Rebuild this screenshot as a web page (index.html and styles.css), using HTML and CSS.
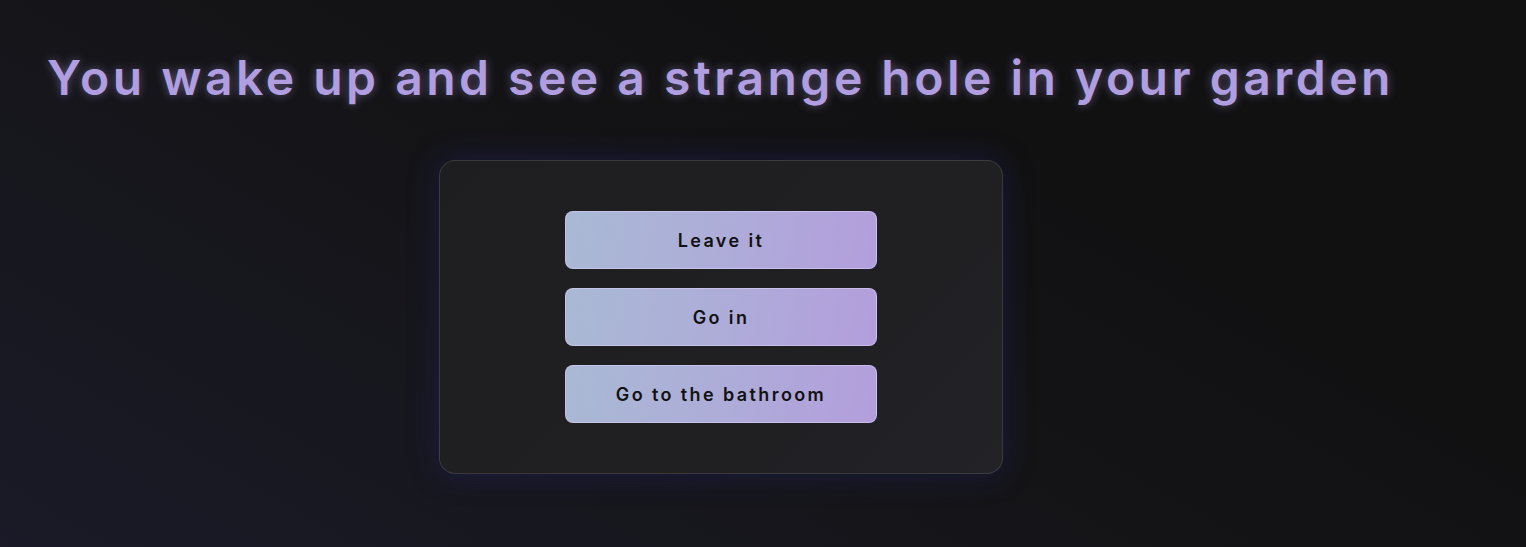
FILE: index.html
```html
<!DOCTYPE html>
<html lang="en">
<head>
<meta charset="utf-8">
<title>Strange hole</title>
<link rel="stylesheet" href="styles.css">
</head>
<body>
<main class="page">
  <h1 class="title">You wake up and see a strange hole in your garden</h1>
  <section class="card">
    <button class="choice">Leave it</button>
    <button class="choice">Go in</button>
    <button class="choice">Go to the bathroom</button>
  </section>
</main>
</body>
</html>
```
FILE: styles.css
```css
html, body {
  margin: 0;
  height: 100%;
}
body {
  background: linear-gradient(30deg, #1a1a28 0%, #151519 40%, #111112 70%, #111112 100%);
  font-family: Inter, "DejaVu Sans", sans-serif;
  overflow: hidden;
}
.page {
  padding: 49px 0 0 47px;
  display: flex;
  flex-direction: column;
  align-items: flex-start;
}
.title {
  margin: 0;
  font-size: 48px;
  line-height: 58px;
  font-weight: 600;
  letter-spacing: 3.5px;
  color: #b09ee0;
  text-shadow: 0 0 10px rgba(176, 158, 224, 0.45);
  white-space: nowrap;
}
.card {
  margin: 53px 0 0 392px;
  width: 564px;
  box-sizing: border-box;
  padding: 50px 0 50px;
  border: 1px solid rgba(255, 255, 255, 0.12);
  border-radius: 16px;
  background: linear-gradient(135deg, #1e1e20 0%, #202023 60%, #222227 100%);
  box-shadow: 0 0 30px rgba(36, 36, 110, 0.45);
  display: flex;
  flex-direction: column;
  align-items: center;
  gap: 19px;
}
.choice {
  width: 312px;
  height: 58px;
  border: 1px solid rgba(220, 210, 250, 0.55);
  border-radius: 8px;
  background: linear-gradient(100deg, #a9b9d4 0%, #adaed8 45%, #b39edc 100%);
  color: #111;
  font-family: inherit;
  font-size: 18px;
  font-weight: 600;
  letter-spacing: 2.4px;
  cursor: pointer;
}
```
